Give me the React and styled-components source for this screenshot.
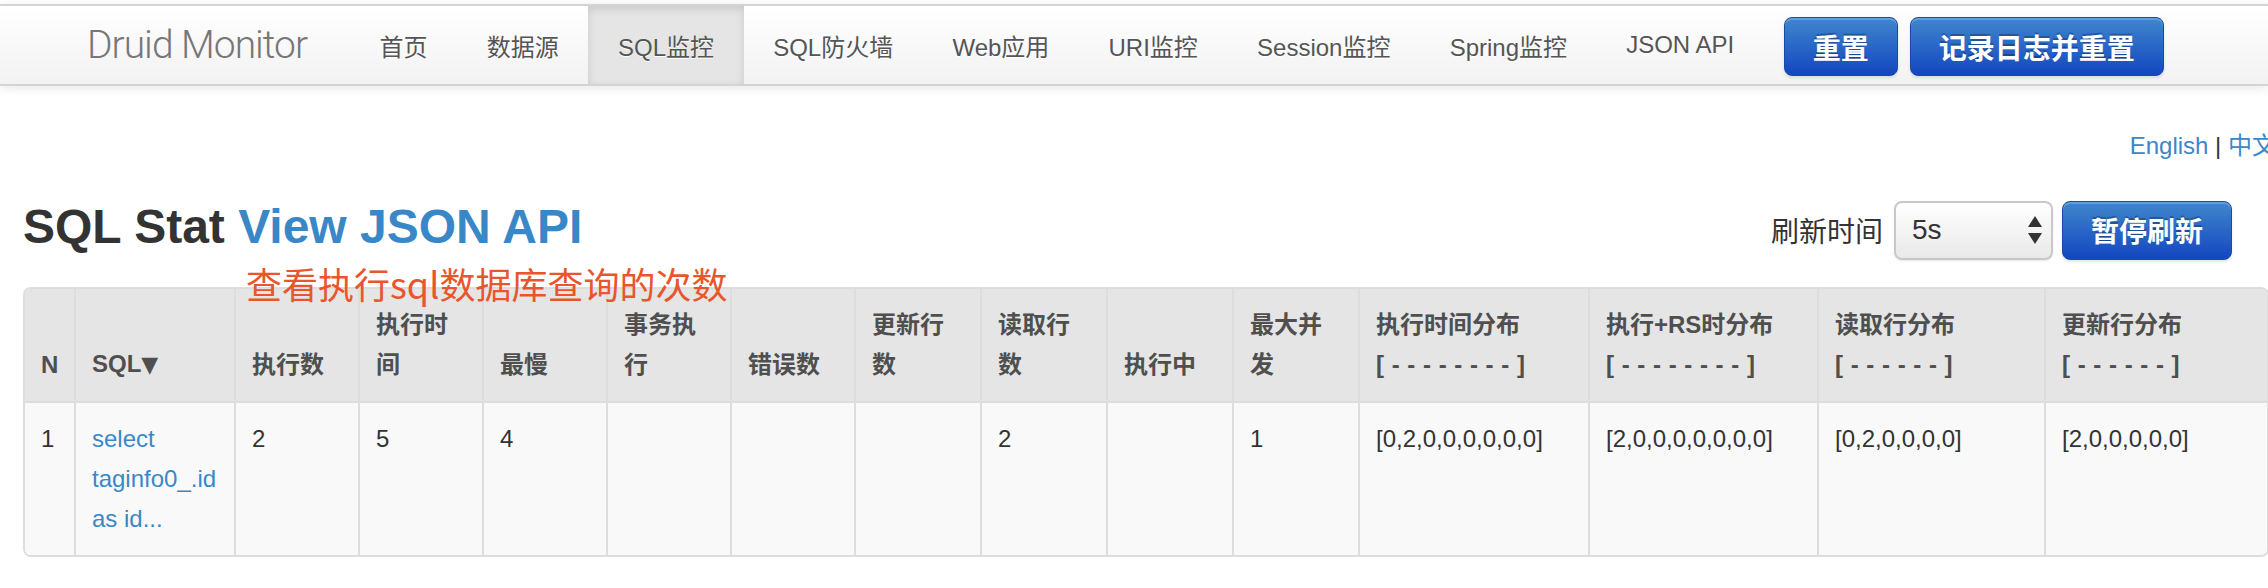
import React from 'react';
import styled, { createGlobalStyle, css } from 'styled-components';

const FONT = `"Liberation Sans", Arial, "Noto Sans CJK SC", sans-serif`;

const Global = createGlobalStyle`
  html, body { margin: 0; padding: 0; background: #fff; }
  body {
    font-family: ${FONT};
    font-size: 24px;
    color: #333;
    overflow: hidden;
    width: 2268px;
  }
  a { text-decoration: none; }
`;

const Page = styled.div`
  padding-top: 4px;
`;

const Navbar = styled.header`
  display: flex;
  align-items: stretch;
  height: 78px;
  padding-left: 87px;
  border-top: 2px solid #d4d4d4;
  border-bottom: 2px solid #d4d4d4;
  background: linear-gradient(#ffffff, #f2f2f2);
  box-shadow: 0 2px 10px rgba(0, 0, 0, 0.1);
`;

const Brand = styled.a`
  flex: 0 0 263px;
  display: flex;
  align-items: center;
  font-family: Roboto, ${FONT};
  font-weight: 300;
  font-size: 39px;
  letter-spacing: -1px;
  color: #777;
`;

const NavList = styled.nav`
  display: flex;
  align-items: stretch;
`;

const NavItem = styled.a`
  display: flex;
  align-items: center;
  padding: 0 29.6px;
  font-size: 24px;
  color: #555;
  text-shadow: 0 1px 0 #fff;
  ${(p) =>
    p.$active &&
    css`
      background: #e5e5e5;
      box-shadow: inset 0 3px 8px rgba(0, 0, 0, 0.125);
    `}
`;

const NavButtons = styled.div`
  display: flex;
  align-items: center;
  gap: 12px;
  margin-left: 20px;
  padding-top: 3px;
`;

const Button = styled.button`
  height: 59px;
  padding: 0 28px;
  border: 1px solid #1a4aa8;
  border-radius: 8px;
  background: linear-gradient(#3f87cd, #1446c0);
  box-shadow: inset 0 2px 0 rgba(255, 255, 255, 0.2), 0 2px 3px rgba(0, 0, 0, 0.1);
  color: #fff;
  font-family: ${FONT};
  font-size: 28px;
  font-weight: bold;
  text-shadow: 0 -2px 0 rgba(0, 0, 0, 0.25);
  cursor: pointer;
`;

const Container = styled.main`
  position: relative;
  width: 2253px;
  padding-left: 23px;
`;

const LangRow = styled.div`
  margin-top: 40px;
  line-height: 40px;
  text-align: right;
  font-size: 24px;
  color: #333;
`;

const Link = styled.a`
  color: #3a87c8;
`;

const HeadRow = styled.div`
  display: flex;
  align-items: center;
  justify-content: space-between;
  height: 60px;
  margin-top: 34px;
`;

const Title = styled.h3`
  margin: 0 0 6px;
  font-size: 48px;
  line-height: 60px;
  font-weight: bold;
  color: #333;
`;

const Refresh = styled.div`
  display: flex;
  align-items: center;
  margin-right: 44px;
`;

const RefreshLabel = styled.span`
  font-size: 28px;
  color: #333;
  margin-right: 11px;
`;

const SelectBox = styled.div`
  box-sizing: border-box;
  display: flex;
  align-items: center;
  justify-content: space-between;
  width: 159px;
  height: 59px;
  padding: 0 8px 0 16px;
  border: 2px solid #c8c8c8;
  border-radius: 8px;
  background: linear-gradient(#ffffff, #e9e9e9);
  box-shadow: 0 1px 2px rgba(0, 0, 0, 0.1);
  font-size: 28px;
  color: #333;
  margin-right: 9px;
`;

const Annotation = styled.div`
  position: absolute;
  left: 246px;
  top: 136px;
  font-family: "Noto Sans CJK SC", ${FONT};
  font-size: 36px;
  line-height: 43px;
  color: #e9552d;
  pointer-events: none;
  z-index: 2;
`;

const Table = styled.table`
  margin-top: 27px;
  width: 2246px;
  table-layout: fixed;
  border-collapse: separate;
  border-spacing: 0;
  border: 2px solid #dddddd;
  border-radius: 8px;
  overflow: hidden;
`;

const cellBase = css`
  padding: 16px;
  line-height: 40px;
  font-size: 24px;
  text-align: left;
  border-left: 2px solid #dddddd;
  &:first-child { border-left: none; }
`;

const Th = styled.th`
  ${cellBase}
  vertical-align: bottom;
  background: #e5e5e5;
  font-weight: bold;
  color: #4f4f4f;
`;

const Td = styled.td`
  ${cellBase}
  vertical-align: top;
  background: #f9f9f9;
  color: #333;
  border-top: 2px solid #dddddd;
  word-wrap: break-word;
`;

const SortArrow = styled.span`
  font-family: "DejaVu Sans", sans-serif;
  font-size: 22px;
`;

const Bracket = styled.span`
  white-space: nowrap;
  letter-spacing: 0.5px;
`;

const SelectArrows = () => (
  <svg width="16" height="30" viewBox="0 0 16 30">
    <polygon points="8,1 15,12 1,12" fill="#333" />
    <polygon points="1,18 15,18 8,29" fill="#333" />
  </svg>
);

const navItems = ['首页', '数据源', 'SQL监控', 'SQL防火墙', 'Web应用', 'URI监控', 'Session监控', 'Spring监控', 'JSON API'];

const colWidths = [49, 160, 124, 124, 124, 124, 124, 126, 126, 126, 126, 230, 229, 227, null];

const dashes = (n) => '[\u00a0' + Array(n).fill('-').join('\u00a0') + '\u00a0]';

const headers = [
  'N',
  <>SQL<SortArrow>▼</SortArrow></>,
  '执行数',
  '执行时间',
  '最慢',
  '事务执行',
  '错误数',
  '更新行数',
  '读取行数',
  '执行中',
  '最大并发',
  <>执行时间分布<br /><Bracket>{dashes(8)}</Bracket></>,
  <>执行+RS时分布<br /><Bracket>{dashes(8)}</Bracket></>,
  <>读取行分布<br /><Bracket>{dashes(6)}</Bracket></>,
  <>更新行分布<br /><Bracket>{dashes(6)}</Bracket></>,
];

const row = [
  '1',
  <Link href="#">select taginfo0_.id as id...</Link>,
  '2',
  '5',
  '4',
  '',
  '',
  '',
  '2',
  '',
  '1',
  '[0,2,0,0,0,0,0,0]',
  '[2,0,0,0,0,0,0,0]',
  '[0,2,0,0,0,0]',
  '[2,0,0,0,0,0]',
];

export default function App() {
  return (
    <Page>
      <Global />
      <Navbar>
        <Brand href="#">Druid Monitor</Brand>
        <NavList>
          {navItems.map((n) => (
            <NavItem key={n} href="#" $active={n === 'SQL监控'}>
              {n}
            </NavItem>
          ))}
        </NavList>
        <NavButtons>
          <Button>重置</Button>
          <Button>记录日志并重置</Button>
        </NavButtons>
      </Navbar>
      <Container>
        <LangRow>
          <Link href="#">English</Link> | <Link href="#">中文</Link>
        </LangRow>
        <HeadRow>
          <Title>
            SQL Stat <Link href="#">View JSON API</Link>
          </Title>
          <Refresh>
            <RefreshLabel>刷新时间</RefreshLabel>
            <SelectBox>
              <span>5s</span>
              <SelectArrows />
            </SelectBox>
            <Button>暂停刷新</Button>
          </Refresh>
        </HeadRow>
        <Annotation>查看执行sql数据库查询的次数</Annotation>
        <Table>
          <colgroup>
            {colWidths.map((w, i) => (
              <col key={i} style={w ? { width: w } : undefined} />
            ))}
          </colgroup>
          <thead>
            <tr>
              {headers.map((h, i) => (
                <Th key={i}>{h}</Th>
              ))}
            </tr>
          </thead>
          <tbody>
            <tr>
              {row.map((c, i) => (
                <Td key={i}>{c}</Td>
              ))}
            </tr>
          </tbody>
        </Table>
      </Container>
    </Page>
  );
}
